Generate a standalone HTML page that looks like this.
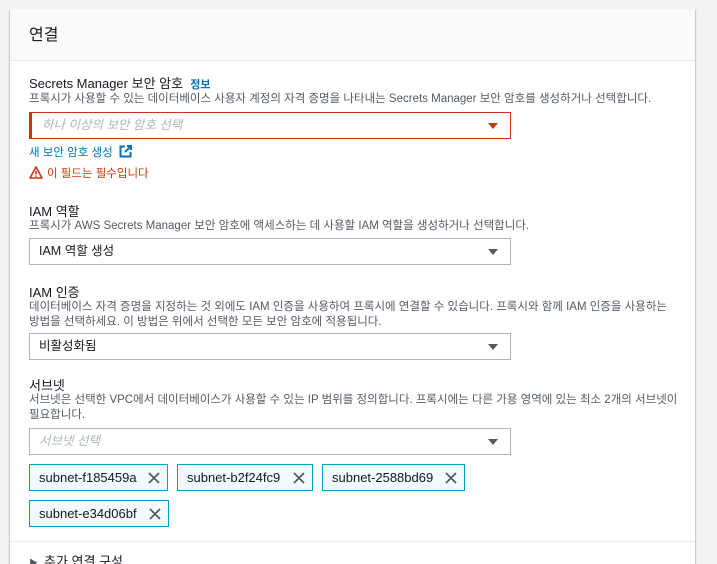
<!DOCTYPE html>
<html><head><meta charset="utf-8"><style>
*{box-sizing:border-box;margin:0;padding:0}
html,body{width:717px;height:564px;overflow:hidden}
body{background:#f2f3f3;font-family:"Liberation Sans","Noto Sans CJK KR",sans-serif;color:#16191f;position:relative;line-height:16px}
.panel{position:absolute;left:10px;top:9px;width:685px;height:555px;background:#fff;box-shadow:0 1px 1px rgba(0,28,36,.3),1px 1px 1px rgba(0,28,36,.15),-1px 1px 1px rgba(0,28,36,.15)}
.hdr{height:52px;background:#fafafa;border-bottom:1px solid #eaeded;padding:17px 19px;font-size:16px;line-height:20px}
.a{position:absolute;left:29px}
.lab{font-size:13px;line-height:16px}
.desc{font-size:11.5px;color:#545b64;line-height:15px}
.sel{position:absolute;left:29px;width:482px;height:27px;border:1px solid #aab7b8;font-size:12.5px;padding:5px 9px;line-height:15px}
.sel.err{border-color:#d13212;border-left-width:3px;padding-left:10px}
.ph{color:#aab7b8;font-style:italic}
.arr{position:absolute;right:12px;top:10px;width:0;height:0;border-left:5px solid transparent;border-right:5px solid transparent;border-top:6px solid #545b64}
.err .arr{border-top-color:#d13212}
.tok{position:absolute;height:27px;border:1px solid #00a1c9;background:#f1faff;font-size:13px;padding:5px 9px;line-height:15px}
.tok svg{position:absolute;right:7px;top:7px}
</style></head><body>
<div class="panel"><div class="hdr">연결</div></div>
<div class="a lab" style="top:76px">Secrets Manager 보안 암호 &nbsp;<span style="color:#0073bb;font-size:11px;font-weight:bold">정보</span></div>
<div class="a desc" style="top:92px">프록시가 사용할 수 있는 데이터베이스 사용자 계정의 자격 증명을 나타내는 Secrets Manager 보안 암호를 생성하거나 선택합니다.</div>
<div class="sel err" style="top:112px"><span class="ph">하나 이상의 보안 암호 선택</span><div class="arr"></div></div>
<div class="a" style="top:145px;font-size:11.5px;color:#0073bb">새 보안 암호 생성 <svg width="13" height="13" viewBox="0 0 13 13" style="vertical-align:-2px;margin-left:3px"><path d="M6 1.5H1.5v10h10V7" fill="none" stroke="#0073bb" stroke-width="2"/><path d="M8 1h4v4M12 1L6 7" fill="none" stroke="#0073bb" stroke-width="2"/></svg></div>
<div class="a" style="top:166px;font-size:11.5px;color:#d13212"><svg width="14" height="13" viewBox="0 0 14 13" style="vertical-align:-2px;margin-right:4px"><path d="M7 1L13 12H1Z" fill="none" stroke="#d13212" stroke-width="1.6" stroke-linejoin="round"/><path d="M7 5v3.5M7 9.5v1.2" stroke="#d13212" stroke-width="1.6"/></svg>이 필드는 필수입니다</div>
<div class="a lab" style="top:204px">IAM 역할</div>
<div class="a desc" style="top:219px">프록시가 AWS Secrets Manager 보안 암호에 액세스하는 데 사용할 IAM 역할을 생성하거나 선택합니다.</div>
<div class="sel" style="top:238px">IAM 역할 생성<div class="arr"></div></div>
<div class="a lab" style="top:285px">IAM 인증</div>
<div class="a desc" style="top:300px;width:645px">데이터베이스 자격 증명을 지정하는 것 외에도 IAM 인증을 사용하여 프록시에 연결할 수 있습니다. 프록시와 함께 IAM 인증을 사용하는 방법을 선택하세요. 이 방법은 위에서 선택한 모든 보안 암호에 적용됩니다.</div>
<div class="sel" style="top:333px">비활성화됨<div class="arr"></div></div>
<div class="a lab" style="top:378px">서브넷</div>
<div class="a desc" style="top:393px;width:650px">서브넷은 선택한 VPC에서 데이터베이스가 사용할 수 있는 IP 범위를 정의합니다. 프록시에는 다른 가용 영역에 있는 최소 2개의 서브넷이 필요합니다.</div>
<div class="sel" style="top:428px"><span class="ph">서브넷 선택</span><div class="arr"></div></div>
<div class="tok" style="left:29px;top:464px;width:139px">subnet-f185459a<svg width="12" height="12" viewBox="0 0 12 12"><path d="M1 1L11 11M11 1L1 11" stroke="#545b64" stroke-width="1.8"/></svg></div>
<div class="tok" style="left:177px;top:464px;width:136px">subnet-b2f24fc9<svg width="12" height="12" viewBox="0 0 12 12"><path d="M1 1L11 11M11 1L1 11" stroke="#545b64" stroke-width="1.8"/></svg></div>
<div class="tok" style="left:322px;top:464px;width:143px">subnet-2588bd69<svg width="12" height="12" viewBox="0 0 12 12"><path d="M1 1L11 11M11 1L1 11" stroke="#545b64" stroke-width="1.8"/></svg></div>
<div class="tok" style="left:29px;top:500px;width:140px">subnet-e34d06bf<svg width="12" height="12" viewBox="0 0 12 12"><path d="M1 1L11 11M11 1L1 11" stroke="#545b64" stroke-width="1.8"/></svg></div>
<div style="position:absolute;left:10px;top:541px;width:685px;border-top:1px solid #eaeded"></div>
<div class="a" style="top:554px;font-size:13px;line-height:16px"><span style="font-size:9px;color:#545b64;margin-right:6px">▶</span>추가 연결 구성</div>
</body></html>
